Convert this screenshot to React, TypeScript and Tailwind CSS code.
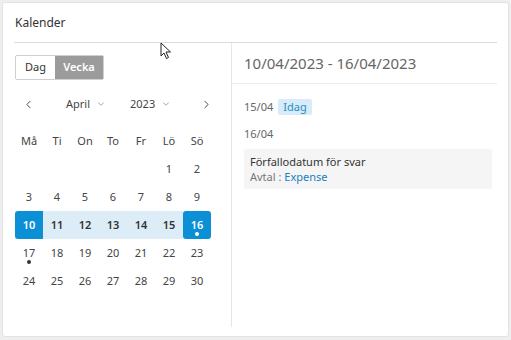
import { ChevronLeft, ChevronRight, ChevronDown } from "lucide-react";

const days = ["Må", "Ti", "On", "To", "Fr", "Lö", "Sö"];

// april 2023 starts on a saturday
const weeks: (number | null)[][] = [
  [null, null, null, null, null, 1, 2],
  [3, 4, 5, 6, 7, 8, 9],
  [10, 11, 12, 13, 14, 15, 16],
  [17, 18, 19, 20, 21, 22, 23],
  [24, 25, 26, 27, 28, 29, 30],
];

const withEvent = [16, 17];

function DayCell({ day, week }: { day: number | null; week: boolean }) {
  const isEdge = day === 10 || day === 16;
  let cls = "relative h-[28px] flex items-center justify-center text-[11px]";
  if (week) {
    cls += " font-semibold";
    if (isEdge) cls += " bg-[#0b8fd5] text-white";
    else cls += " bg-[#dcedf8] text-[#333]";
    if (day === 10) cls += " rounded-l-[3px]";
    if (day === 16) cls += " rounded-[3px]";
  } else {
    cls += " text-[#444]";
  }
  return (
    <div className={cls}>
      {day}
      {day && withEvent.includes(day) && (
        <span
          className={
            "absolute bottom-[3px] left-1/2 -translate-x-1/2 w-[4px] h-[4px] rounded-full " +
            (week ? "bg-white" : "bg-[#333]")
          }
        />
      )}
    </div>
  );
}

export default function App() {
  return (
    <div className="w-[511px] h-[340px] bg-[#efefef] p-[2px] font-['Noto_Sans',sans-serif]">
      <div className="relative w-[507px] h-[335px] bg-white border border-[#e2e2e2] rounded-[3px] px-[11px] flex flex-col">
        <div className="h-[40px] flex items-center pl-[1px] border-b border-[#dcdcdc] text-[12px] text-[#333]">
          Kalender
        </div>

        <div className="flex h-[284px]">
          {/* left: calendar */}
          <div className="w-[218px] border-r border-[#e6e6e6] pt-[12px] pl-[1px]">
            <div className="flex w-[89px] h-[25px] border border-[#cfcfcf] rounded-[2px] text-[11px]">
              <div className="w-[39px] flex items-center justify-center text-[#333]">Dag</div>
              <div className="flex-1 flex items-center justify-center bg-[#9b9b9b] text-white font-semibold">
                Vecka
              </div>
            </div>

            <div className="flex items-center h-[28px] mt-[10px] text-[11px] text-[#444]">
              <ChevronLeft size={13} strokeWidth={1.6} className="ml-[7px] text-[#333]" />
              <div className="flex items-center ml-[31px] gap-[6px]">
                April <ChevronDown size={10} strokeWidth={1.6} className="text-[#777]" />
              </div>
              <div className="flex items-center ml-[24px] gap-[6px]">
                2023 <ChevronDown size={10} strokeWidth={1.6} className="text-[#777]" />
              </div>
              <ChevronRight size={13} strokeWidth={1.6} className="ml-[29px] text-[#333]" />
            </div>

            <div className="w-[196px] mt-[9px]">
              <div className="grid grid-cols-7 h-[28px] items-center text-[11px] text-[#444]">
                {days.map((d) => (
                  <div key={d} className="text-center">
                    {d}
                  </div>
                ))}
              </div>
              {weeks.map((w, i) => (
                <div key={i} className="grid grid-cols-7">
                  {w.map((d, j) => (
                    <DayCell key={j} day={d} week={i === 2} />
                  ))}
                </div>
              ))}
            </div>
          </div>

          {/* right: agenda */}
          <div className="flex-1 flex flex-col">
            <div className="h-[41px] flex items-center pl-[12px] border-b border-[#ececec] text-[15px] text-[#666]">
              10/04/2023 - 16/04/2023
            </div>
            <div className="pl-[12px] pr-[5px]">
              <div className="flex items-center mt-[15px] h-[16px] text-[11px] text-[#666]">
                15/04
                <span className="ml-[5px] px-[5px] h-[16px] flex items-center rounded-[2px] bg-[#d7ecf8] text-[#2b8cc4]">
                  Idag
                </span>
              </div>
              <div className="mt-[12px] text-[11px] text-[#666] leading-[14px]">16/04</div>
              <div className="mt-[8px] bg-[#f5f5f5] rounded-[3px] h-[40px] px-[6px] flex flex-col justify-center text-[11px] leading-[15px]">
                <div className="text-[#333]">Förfallodatum för svar</div>
                <div className="text-[#777]">
                  Avtal : <span className="text-[#1a7fc0]">Expense</span>
                </div>
              </div>
            </div>
          </div>
        </div>

        {/* mouse pointer */}
        <svg
          className="absolute left-[157px] top-[39px]"
          width="12"
          height="18"
          viewBox="0 0 12 18"
        >
          <path
            d="M1 1 L1 14 L4 11 L6.5 16.5 L8.5 15.5 L6 10 L10.5 10 Z"
            fill="white"
            stroke="#222"
            strokeWidth="1"
            strokeLinejoin="round"
          />
        </svg>
      </div>
    </div>
  );
}
